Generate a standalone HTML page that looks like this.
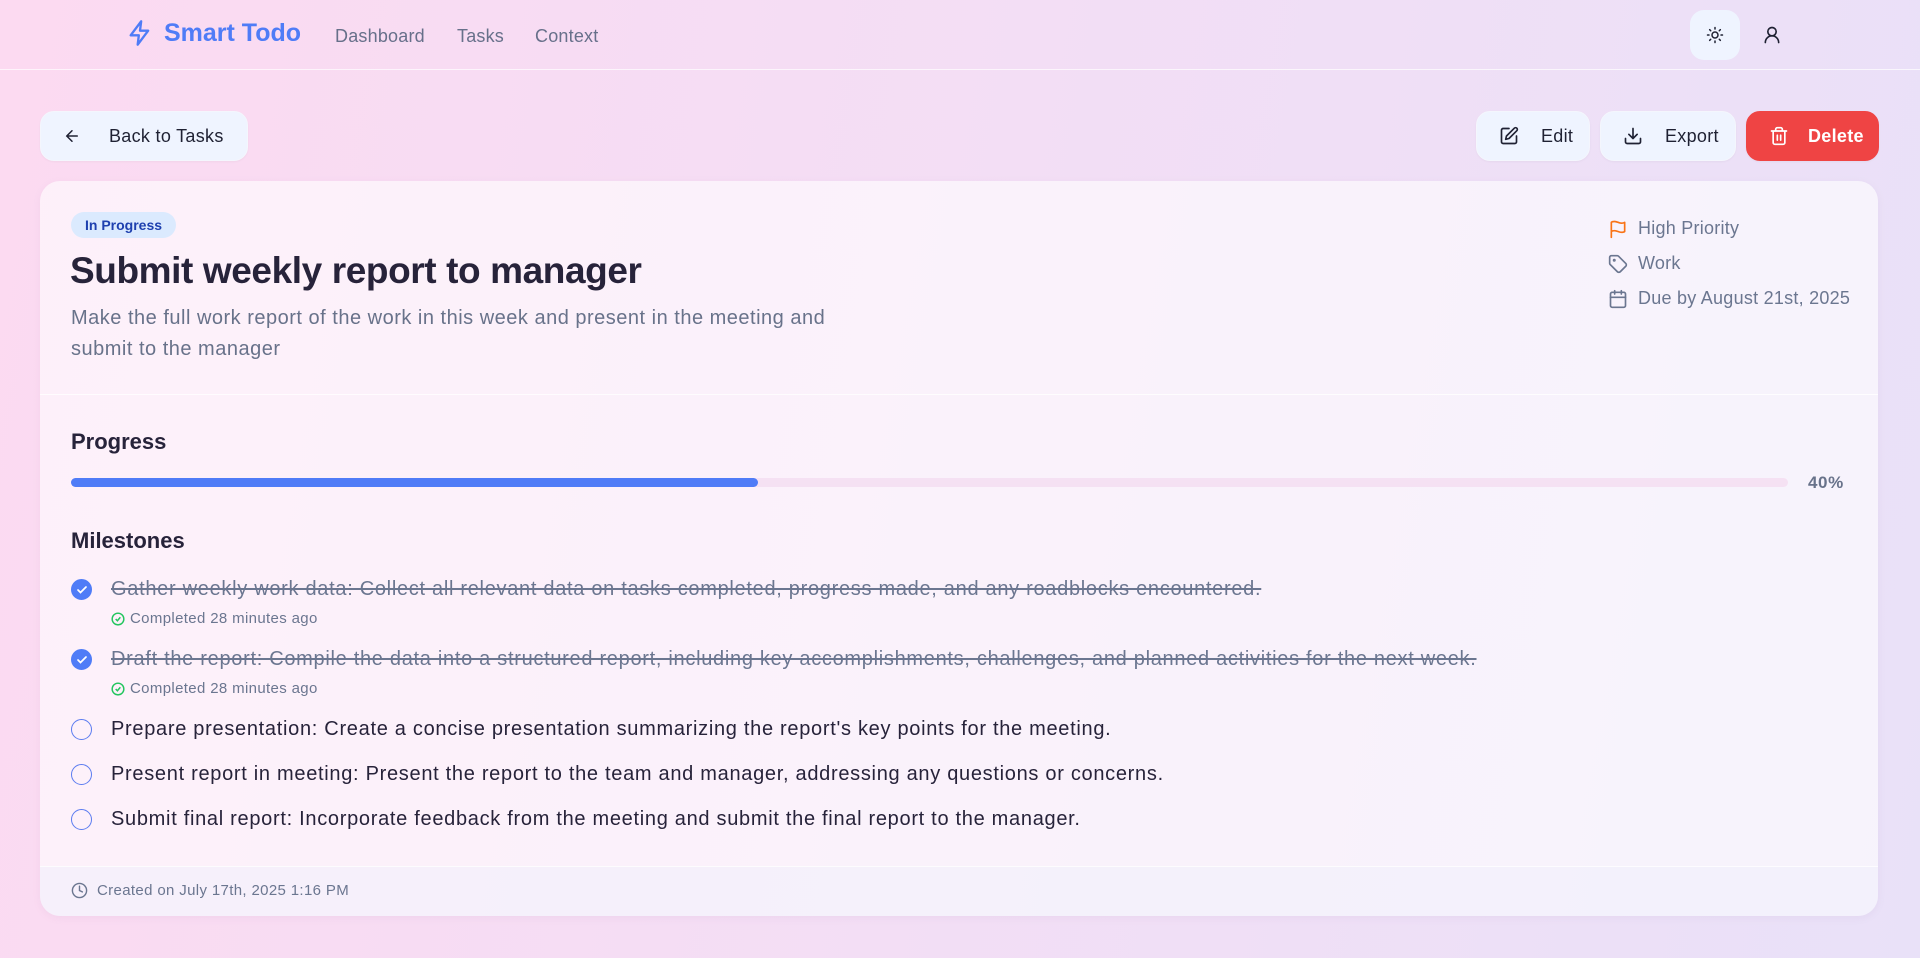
<!DOCTYPE html>
<html><head><meta charset="utf-8">
<style>
*{box-sizing:border-box;margin:0;padding:0}
body{width:1920px;height:958px;overflow:hidden;font-family:"Liberation Sans",sans-serif;background:linear-gradient(100deg,#fcdaf1 0%,#f3def5 50%,#e9e1f8 100%);position:relative;color:#27233a}
.abs{position:absolute}
.nav{left:0;top:0;width:1920px;height:70px;border-bottom:1px solid rgba(255,255,255,.7)}
.logo{left:126px;top:18px;display:flex;align-items:center;gap:10px;color:#4f7cf7;font-size:25px;font-weight:bold}
.link{top:26px;font-size:18px;color:#67708a;letter-spacing:.2px}
.btn{height:50px;border-radius:14px;background:#eff4ff;border:1px solid #f4f6fd;display:flex;align-items:center;font-size:18px;color:#1f2133;box-shadow:0 1px 2px rgba(0,0,0,.04);letter-spacing:.3px}
.btn svg{margin-right:22px}
.card{left:40px;top:181px;width:1838px;height:735px;border-radius:20px;background:rgba(255,255,255,.6);box-shadow:0 2px 8px rgba(150,120,170,.08);overflow:hidden}
.meta{left:1608px;font-size:18px;color:#6b7690;display:flex;align-items:center;gap:10px;letter-spacing:.25px}
.mi{left:71px;display:flex;align-items:center;font-size:20px;letter-spacing:.7px;color:#27233a}
.mi .c{width:21px;height:21px;border-radius:50%;border:1.5px solid #5b7cf0;margin-right:19px;flex:none;display:flex;align-items:center;justify-content:center}
.mi .c.on{background:#4f7cf7;border-color:#4f7cf7}
.mi.done{color:#6b7690;text-decoration:line-through}
.sub{left:111px;font-size:15px;color:#6b7690;display:flex;align-items:center;gap:5px;letter-spacing:.35px}
</style></head><body>
<div class="abs nav"></div>
<div class="abs logo"><svg width="28" height="30" viewBox="0 0 24 24" fill="none" stroke="#4f7cf7" stroke-width="2" stroke-linejoin="round"><path d="M13 2L4 14h7l-1 8 9-12h-7z"/></svg>Smart Todo</div>
<div class="abs link" style="left:335px">Dashboard</div>
<div class="abs link" style="left:457px">Tasks</div>
<div class="abs link" style="left:535px">Context</div>
<div class="abs" style="left:1690px;top:10px;width:50px;height:50px;border-radius:14px;background:#eff4ff;display:flex;align-items:center;justify-content:center"><svg width="18" height="18" viewBox="0 0 24 24" fill="none" stroke="#1f2133" stroke-width="2" stroke-linecap="round"><circle cx="12" cy="12" r="4"/><path d="M12 2v2M12 20v2M4.9 4.9l1.4 1.4M17.7 17.7l1.4 1.4M2 12h2M20 12h2M4.9 19.1l1.4-1.4M17.7 6.3l1.4-1.4"/></svg></div>
<div class="abs" style="left:1762px;top:24px"><svg width="20" height="22" viewBox="0 0 24 24" fill="none" stroke="#1f2133" stroke-width="2" stroke-linecap="round"><circle cx="12" cy="8" r="5"/><path d="M20 21a8 8 0 0 0-16 0"/></svg></div>

<div class="abs btn" style="left:40px;top:111px;width:208px;padding-left:22px"><svg width="18" height="18" viewBox="0 0 24 24" fill="none" stroke="#1f2133" stroke-width="2" stroke-linecap="round" style="margin-right:28px"><path d="M19 12H5M12 19l-7-7 7-7"/></svg>Back to Tasks</div>
<div class="abs btn" style="left:1476px;top:111px;width:114px;padding-left:22px"><svg width="20" height="20" viewBox="0 0 24 24" fill="none" stroke="#1f2133" stroke-width="2" stroke-linecap="round" stroke-linejoin="round"><path d="M12 3H5a2 2 0 0 0-2 2v14a2 2 0 0 0 2 2h14a2 2 0 0 0 2-2v-7"/><path d="M18.4 2.6a2.1 2.1 0 0 1 3 3L12 15l-4 1 1-4z"/></svg>Edit</div>
<div class="abs btn" style="left:1600px;top:111px;width:136px;padding-left:22px"><svg width="20" height="20" viewBox="0 0 24 24" fill="none" stroke="#1f2133" stroke-width="2" stroke-linecap="round" stroke-linejoin="round"><path d="M21 15v4a2 2 0 0 1-2 2H5a2 2 0 0 1-2-2v-4M7 10l5 5 5-5M12 15V3"/></svg>Export</div>
<div class="abs btn" style="left:1746px;top:111px;width:133px;padding-left:22px;background:#ef4444;border-color:#ef4444;color:#fff;font-weight:bold"><svg width="20" height="20" viewBox="0 0 24 24" fill="none" stroke="#fff" stroke-width="2" stroke-linecap="round" style="margin-right:19px"><path d="M3 6h18M19 6v14a2 2 0 0 1-2 2H7a2 2 0 0 1-2-2V6M8 6V4a2 2 0 0 1 2-2h4a2 2 0 0 1 2 2v2M10 11v6M14 11v6"/></svg>Delete</div>

<div class="abs card">
 <div class="abs" style="left:31px;top:31px;height:26px;padding:0 14px;border-radius:13px;background:#dbeafe;color:#1e40af;font-size:14px;font-weight:bold;line-height:26px">In Progress</div>
 <div class="abs" style="left:30px;top:69px;font-size:37px;font-weight:600;color:#27233a;letter-spacing:-0.4px">Submit weekly report to manager</div>
 <div class="abs" style="left:31px;top:122px;width:800px;font-size:20px;line-height:31px;color:#68728a;letter-spacing:.5px">Make the full work report of the work in this week and present in the meeting and submit to the manager</div>
 <div class="abs" style="left:0;top:213px;width:100%;height:1px;background:rgba(255,255,255,.8)"></div>
 <div class="abs" style="left:31px;top:248px;font-size:22px;font-weight:600">Progress</div>
 <div class="abs" style="left:31px;top:297px;width:1717px;height:9px;border-radius:5px;background:#f5e1f3"><div style="width:40%;height:100%;border-radius:5px;background:#4f7cf7"></div></div>
 <div class="abs" style="left:1768px;top:292px;font-size:17px;font-weight:bold;color:#68728a;letter-spacing:.6px">40%</div>
 <div class="abs" style="left:31px;top:347px;font-size:22px;font-weight:600">Milestones</div>
 <div class="abs" style="left:0;top:685px;width:100%;height:50px;background:rgba(240,240,252,.5);border-top:1px solid rgba(255,255,255,.8)"></div>
</div>
<div class="abs meta" style="top:218px"><svg width="20" height="20" viewBox="0 0 24 24" fill="none" stroke="#f97316" stroke-width="2" stroke-linecap="round" stroke-linejoin="round"><path d="M4 22V4s1-1 4-1 5 2 8 2 4-1 4-1v11s-1 1-4 1-5-2-8-2-4 1-4 1"/></svg>High Priority</div>
<div class="abs meta" style="top:253px"><svg width="20" height="20" viewBox="0 0 24 24" fill="none" stroke="#6b7690" stroke-width="2" stroke-linecap="round" stroke-linejoin="round"><path d="M12.6 2.6A2 2 0 0 0 11.2 2H4a2 2 0 0 0-2 2v7.2a2 2 0 0 0 .6 1.4l8.7 8.7a2.4 2.4 0 0 0 3.4 0l6.6-6.6a2.4 2.4 0 0 0 0-3.4z"/><circle cx="7.5" cy="7.5" r=".8"/></svg>Work</div>
<div class="abs meta" style="top:288px"><svg width="20" height="20" viewBox="0 0 24 24" fill="none" stroke="#6b7690" stroke-width="2" stroke-linecap="round"><rect x="3" y="4" width="18" height="18" rx="2"/><path d="M16 2v4M8 2v4M3 10h18"/></svg>Due by August 21st, 2025</div>

<div class="abs mi done" style="top:578px"><span class="c on"><svg width="12" height="12" viewBox="0 0 24 24" fill="none" stroke="#fff" stroke-width="3.5" stroke-linecap="round"><path d="M20 6L9 17l-5-5"/></svg></span>Gather weekly work data: Collect all relevant data on tasks completed, progress made, and any roadblocks encountered.</div>
<div class="abs sub" style="top:610px"><svg width="14" height="14" viewBox="0 0 24 24" fill="none" stroke="#22c55e" stroke-width="2.5"><circle cx="12" cy="12" r="10"/><path d="M8 12l3 3 5-6"/></svg>Completed 28 minutes ago</div>
<div class="abs mi done" style="top:648px"><span class="c on"><svg width="12" height="12" viewBox="0 0 24 24" fill="none" stroke="#fff" stroke-width="3.5" stroke-linecap="round"><path d="M20 6L9 17l-5-5"/></svg></span>Draft the report: Compile the data into a structured report, including key accomplishments, challenges, and planned activities for the next week.</div>
<div class="abs sub" style="top:680px"><svg width="14" height="14" viewBox="0 0 24 24" fill="none" stroke="#22c55e" stroke-width="2.5"><circle cx="12" cy="12" r="10"/><path d="M8 12l3 3 5-6"/></svg>Completed 28 minutes ago</div>
<div class="abs mi" style="top:718px"><span class="c"></span>Prepare presentation: Create a concise presentation summarizing the report's key points for the meeting.</div>
<div class="abs mi" style="top:763px"><span class="c"></span>Present report in meeting: Present the report to the team and manager, addressing any questions or concerns.</div>
<div class="abs mi" style="top:808px"><span class="c"></span>Submit final report: Incorporate feedback from the meeting and submit the final report to the manager.</div>
<div class="abs sub" style="left:71px;top:882px;gap:9px"><svg width="17" height="17" viewBox="0 0 24 24" fill="none" stroke="#6b7690" stroke-width="2" stroke-linecap="round"><circle cx="12" cy="12" r="10"/><path d="M12 6v6l4 2"/></svg>Created on July 17th, 2025 1:16 PM</div>
</body></html>
